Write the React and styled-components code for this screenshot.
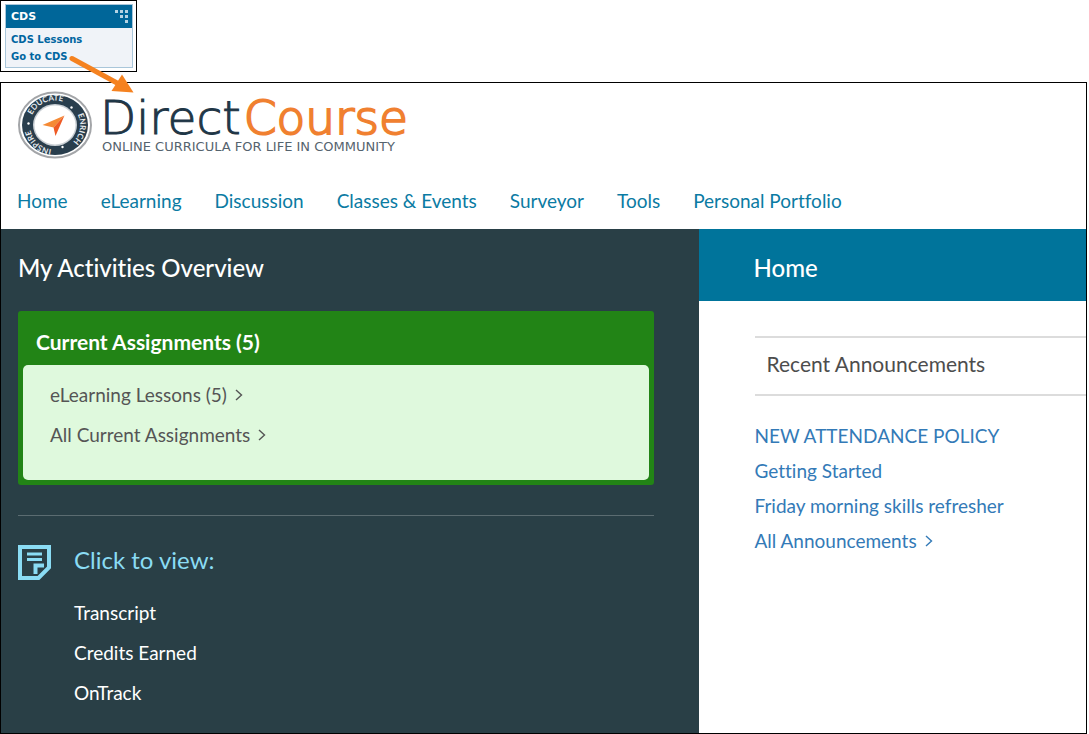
import React from 'react';
import styled, { createGlobalStyle } from 'styled-components';

const GlobalStyle = createGlobalStyle`
  * {
    box-sizing: border-box;
  }

  body {
    margin: 0;
    background: #fff;
    font-family: Lato, 'Open Sans', sans-serif;
    font-size: 19px;
    font-variant-ligatures: none;
  }

  h1, h2, h3, ul {
    margin: 0;
    padding: 0;
  }

  ul {
    list-style: none;
  }

  a {
    color: inherit;
    text-decoration: none;
  }
`;

const Page = styled.div`
  position: relative;
  display: flex;
  flex-direction: column;
  gap: 10px;
  min-height: 100vh;
  padding-right: 2px;
`;

const WidgetFrame = styled.aside`
  align-self: flex-start;
  min-width: 137px;
  padding: 3px 3px 3px 4px;
  border: 1px solid #000;
  font-family: 'DejaVu Sans', Verdana, sans-serif;
  font-weight: 700;
`;

const Widget = styled.div`
  border: 1px solid #a9c6da;
  background: #f0f3f8;
`;

const WidgetHeader = styled.div`
  display: flex;
  justify-content: space-between;
  align-items: flex-start;
  height: 23px;
  padding: 5px 3px 0 5px;
  background: #006699;
  color: #fff;
`;

const WidgetTitle = styled.h2`
  font-size: 11px;
  line-height: 14px;
`;

const WidgetLinks = styled.ul`
  padding: 3px 5px 2px;
  font-size: 10px;
  line-height: 17px;
  color: #0065a0;
`;

const Arrow = styled.svg`
  position: absolute;
  top: 52px;
  left: 66px;
  z-index: 1;
`;

const Portal = styled.div`
  flex: 1;
  display: flex;
  flex-direction: column;
  border: 1px solid #000;
`;

const Header = styled.header`
  padding: 8px 16px 14px;
`;

const Logo = styled.a`
  display: flex;
  gap: 8px;
  height: 70px;
`;

const LogoText = styled.span`
  display: flex;
  flex-direction: column;
  padding-top: 4px;
  font-family: 'DejaVu Sans', sans-serif;
  white-space: nowrap;
`;

const Wordmark = styled.span`
  font-size: 47px;
  font-weight: 200;
  line-height: 46px;
  color: #1f3646;
  -webkit-text-stroke: 1px currentColor;
`;

const WordmarkAccent = styled.span`
  margin-left: 3px;
  color: #f08030;
  -webkit-text-stroke: 2px currentColor;
`;

const Tagline = styled.span`
  padding-left: 2px;
  font-size: 13px;
  line-height: 12px;
  color: #55636e;
`;

const Nav = styled.nav`
  display: flex;
  gap: 33px;
  margin-top: 26px;
  line-height: 28px;
  color: #0b7ba3;
`;

const Columns = styled.div`
  flex: 1;
  display: grid;
  grid-template-columns: 9fr 5fr;
`;

const Activities = styled.main`
  padding: 0 45px 20px 17px;
  background: #293f46;
  color: #fff;
`;

const Title = styled.h1`
  font-size: 24px;
  font-weight: 500;
  line-height: 78px;
`;

const Card = styled.section`
  margin-top: 4px;
  padding: 0 5px 5px;
  border-radius: 3px;
  background: #228416;
`;

const CardTitle = styled.h2`
  padding: 13px 13px 5px;
  font-size: 21px;
  line-height: 36px;
`;

const CardBody = styled.ul`
  padding: 10px 27px 25px;
  border-radius: 5px;
  background: #dff9dd;
  color: #555;
`;

const Item = styled.li`
  display: flex;
  align-items: center;
  gap: 8px;
  line-height: ${({ $height }) => $height}px;
`;

const Divider = styled.hr`
  margin: 30px 0 29px;
  border: 0;
  border-top: 1px solid #5b6c71;
`;

const ViewHeading = styled.div`
  display: flex;
  gap: 23px;
  color: #8adcf4;
`;

const ViewTitle = styled.h2`
  font-size: 24px;
  font-weight: 400;
  line-height: 30px;
`;

const ViewLinks = styled.ul`
  padding: 13px 0 0 56px;
`;

const Side = styled.aside`
  background: #fff;
`;

const SideBanner = styled.div`
  height: 72px;
  padding-left: 55px;
  background: #00749b;
  color: #fff;
`;

const SideContent = styled.div`
  padding: 35px 0 0 56px;
`;

const SectionTitle = styled.h3`
  padding: 0 12px 4px;
  border: solid #dcdcdc;
  border-width: 2px 0;
  font-size: 21px;
  font-weight: 400;
  line-height: 52px;
  color: #4d4d4d;
`;

const Announcements = styled.ul`
  padding-top: 22px;
  color: #337ab7;
`;

const navItems = ['Home', 'eLearning', 'Discussion', 'Classes & Events', 'Surveyor', 'Tools', 'Personal Portfolio'];
const announcements = ['NEW ATTENDANCE POLICY', 'Getting Started', 'Friday morning skills refresher'];
const records = ['Transcript', 'Credits Earned', 'OnTrack'];

const Chevron = () => (
  <svg width="8" height="12" viewBox="0 0 8 12" fill="none" stroke="currentColor" strokeWidth="1.4" aria-hidden="true">
    <path d="M1 1l5.500 5L1 11" />
  </svg>
);

const DotGrid = () => (
  <svg width="14" height="14" fill="#b5d3e3" aria-hidden="true">
    <path d="M0 0h3v3H0zM5 0h3v3H5zM10 0h3v3h-3zM5 5h3v3H5zM10 5h3v3h-3zM10 10h3v3h-3z" />
  </svg>
);

const NoteIcon = () => (
  <svg width="33" height="35" viewBox="0 0 33 35" fill="none" stroke="currentColor" aria-hidden="true">
    <path d="M2 2h29v20.500l-10.500 10.500H2z" strokeWidth="4" />
    <path d="M9 9h15M9 14.500h15" strokeWidth="3" />
    <path d="M17.500 29v-8.500H26" strokeWidth="4" />
  </svg>
);

const Emblem = () => (
  <svg width="75" height="70" viewBox="0 0 75 70" aria-hidden="true">
    <defs>
      <path id="ring" d="M38 58.500A25 24.500 0 0 1 38 9.500A25 24.500 0 0 1 38 58.500A25 24.500 0 0 1 38 9.500A25 24.500 0 0 1 38 58.500" />
    </defs>
    <ellipse cx="38" cy="34" rx="36" ry="32.500" fill="#fff" stroke="#a3a5a8" strokeWidth="2" />
    <ellipse cx="38" cy="34" rx="33" ry="30" fill="#293e4d" />
    <ellipse cx="38" cy="34" rx="22" ry="21" fill="#c9cfd4" />
    <ellipse cx="38" cy="34" rx="20.500" ry="19.500" fill="#fff" />
    <g fill="#e6eaed" fontFamily="Lato, sans-serif" fontSize="8" fontWeight="700" textAnchor="middle">
      <text><textPath href="#ring" startOffset="21.700%">EDUCATE</textPath></text>
      <text><textPath href="#ring" startOffset="38.800%">ENRICH</textPath></text>
      <text><textPath href="#ring" startOffset="56%">INSPIRE</textPath></text>
    </g>
    <g fill="#fff">
      <circle cx="54.500" cy="16.500" r="1.200" />
      <circle cx="45.500" cy="56" r="1.200" />
      <circle cx="11.500" cy="32.500" r="1.200" />
    </g>
    <path d="M47.500 24.500L25.500 34l11 2.500z" fill="#f58a35" />
    <path d="M47.500 24.500l-11 12L38.500 45z" fill="#ee5a24" />
  </svg>
);

const App = () => (
  <>
    <GlobalStyle />
    <Page>
      <WidgetFrame>
        <Widget>
          <WidgetHeader>
            <WidgetTitle>CDS</WidgetTitle>
            <DotGrid />
          </WidgetHeader>
          <WidgetLinks>
            <li><a href="#lessons">CDS Lessons</a></li>
            <li><a href="#portal">Go to CDS</a></li>
          </WidgetLinks>
        </Widget>
      </WidgetFrame>

      <Arrow width="70" height="42" fill="#f58220" aria-hidden="true">
        <path d="M6 6.500l46 25" stroke="#f58220" strokeWidth="5" strokeLinecap="round" />
        <path d="M56 22.500L67.500 40.500 45.500 39z" />
      </Arrow>

      <Portal id="portal">
        <Header>
          <Logo href="#home">
            <Emblem />
            <LogoText>
              <Wordmark>Direct<WordmarkAccent>Course</WordmarkAccent></Wordmark>
              <Tagline>ONLINE CURRICULA FOR LIFE IN COMMUNITY</Tagline>
            </LogoText>
          </Logo>
          <Nav>
            {navItems.map((item) => (
              <a key={item} href="#home">{item}</a>
            ))}
          </Nav>
        </Header>

        <Columns>
          <Activities>
            <Title>My Activities Overview</Title>
            <Card>
              <CardTitle>Current Assignments (5)</CardTitle>
              <CardBody>
                <Item $height={40}><a href="#lessons">eLearning Lessons (5)</a><Chevron /></Item>
                <Item $height={40}><a href="#assignments">All Current Assignments</a><Chevron /></Item>
              </CardBody>
            </Card>
            <Divider />
            <ViewHeading>
              <NoteIcon />
              <ViewTitle>Click to view:</ViewTitle>
            </ViewHeading>
            <ViewLinks>
              {records.map((record) => (
                <Item key={record} $height={40}><a href="#records">{record}</a></Item>
              ))}
            </ViewLinks>
          </Activities>

          <Side>
            <SideBanner><Title as="h2">Home</Title></SideBanner>
            <SideContent>
              <SectionTitle>Recent Announcements</SectionTitle>
              <Announcements>
                {announcements.map((text) => (
                  <Item key={text} $height={35}><a href="#announcements">{text}</a></Item>
                ))}
                <Item $height={35}><a href="#announcements">All Announcements</a><Chevron /></Item>
              </Announcements>
            </SideContent>
          </Side>
        </Columns>
      </Portal>
    </Page>
  </>
);

export default App;
